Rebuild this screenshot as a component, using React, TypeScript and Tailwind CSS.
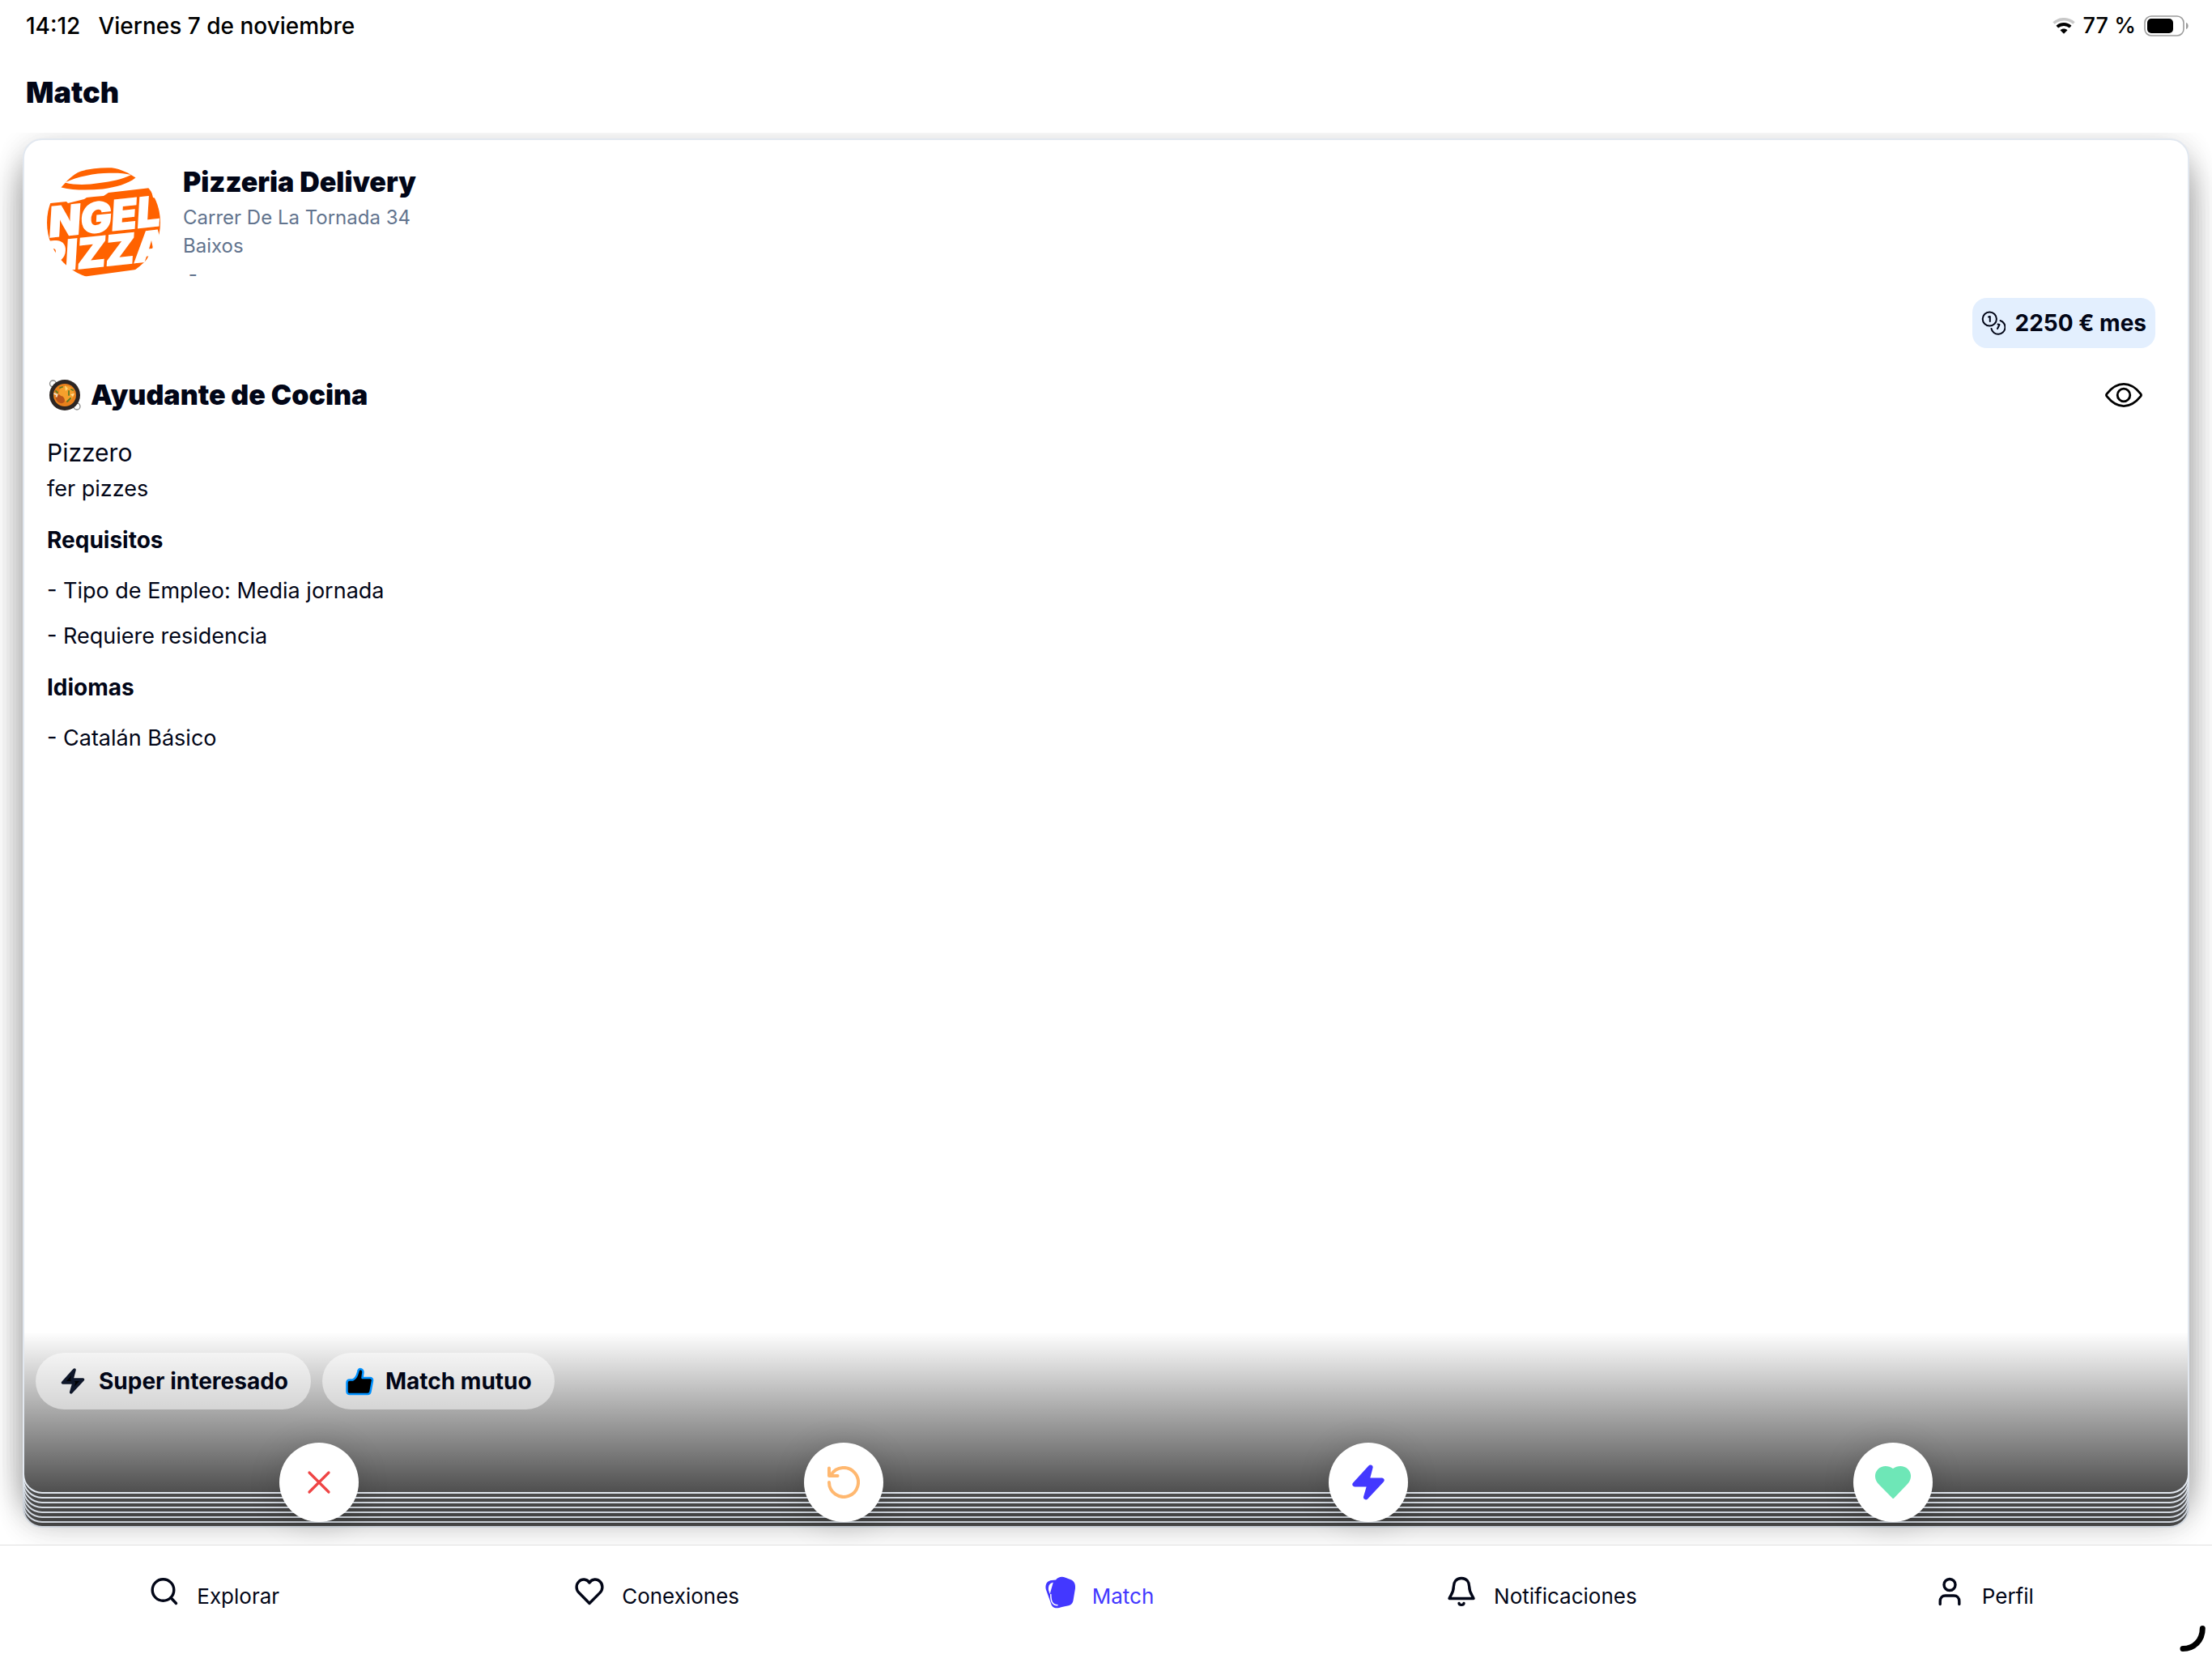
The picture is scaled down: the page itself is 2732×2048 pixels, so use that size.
import type { ReactNode } from 'react';

const BoltShape = 'M22.6 3.4 3.4 24.6h18.2L17 40.4 36.6 19.4H18.4z';

// Full class names so Tailwind can pick them up
const BACK_CARDS = [
  'top-[42px] -bottom-[42px]',
  'top-[36px] -bottom-[36px]',
  'top-[30px] -bottom-[30px]',
  'top-[24px] -bottom-[24px]',
  'top-[18px] -bottom-[18px]',
  'top-[12px] -bottom-[12px]',
  'top-[6px] -bottom-[6px]',
];

const CARD_SHADOW = 'shadow-[0_4px_44px_rgba(0,0,0,0.065)]';

const requisitos = ['- Tipo de Empleo: Media jornada', '- Requiere residencia'];
const idiomas = ['- Catalán Básico'];

function CompanyLogo() {
  return (
    <svg className="w-[140px] h-[140px] shrink-0 overflow-visible" viewBox="0 0 140 140" role="img" aria-label="Angelo Pizza">
      <defs>
        <clipPath id="logo-clip"><circle cx="70" cy="70" r="70" /></clipPath>
      </defs>
      <g clipPath="url(#logo-clip)">
        <path d="M17.5 26.5C24 19 32 10 42 6.500C54 3 66 2 80 2.300C92 4 101 9 109.500 14.500C100 22 86 26 69 28.500C52 30 34 30.500 17.500 26.500Z" fill="#ff6200" />
        <path d="M22 20.500C38 13 60 8.500 78 8.700C88 8.500 96 9 104 11C92 17 80 19 65 21C50 23.500 36 24 22 20.500Z" fill="#fff" />
        <path d="M0 46.500 24 44l2 2 20-5 3-2 9-1 12-1 6-4 52-6 3 12 9 2V92l-7 4-11 22-12 10-70 9.500-9-6L24 124 3 100V91L0 88Z" fill="#ff6200" />
      </g>
      <g fill="#fff" stroke="#fff" strokeWidth="1.500" className="font-['Inter'] font-black italic">
        <text x="4" y="88" fontSize="51" transform="rotate(-6 4 88)">NGEL</text>
        <text x="-9" y="132" fontSize="51" transform="rotate(-6 -9 132)">PIZZA</text>
      </g>
    </svg>
  );
}

function PaellaIcon() {
  return (
    <svg className="w-10 h-10 shrink-0" viewBox="0 0 40 40" aria-hidden="true">
      <circle cx="5.500" cy="6" r="4" fill="none" stroke="#8a8a8a" strokeWidth="1.300" />
      <circle cx="35" cy="34" r="4" fill="none" stroke="#8a8a8a" strokeWidth="1.300" />
      <circle cx="20" cy="20" r="19" fill="#2c2624" />
      <circle cx="20" cy="20" r="14" fill="#e8811c" />
      <circle cx="22" cy="18" r="9.500" fill="#f5a02c" />
      <path d="M9 20c2-2 5-1 6 1 3 0 5 3 5 6-1 4-6 4-9 1-2-2-3-5-2-8z" fill="#b8541a" />
      <path d="M6.500 18l4 1.500-1 3" stroke="#f3ddc0" strokeWidth="2" fill="none" />
      <path d="M20 8l4 4-3 3z" fill="#ffd77a" />
      <path d="M27 19l5-1-2 4z" fill="#ffe09a" />
      <path d="M14 11l3-1M25 15v5M23 28l4-4M9 15l2 2M28 13l2 1" stroke="#5c7a25" strokeWidth="1.800" strokeLinecap="round" />
    </svg>
  );
}

function CoinsIcon() {
  return (
    <svg className="w-[30px] h-[30px]" viewBox="0 0 30 30" fill="none" stroke="currentColor" strokeWidth="2" strokeLinecap="round" strokeLinejoin="round" aria-hidden="true">
      <circle cx="10.300" cy="10" r="8.600" />
      <path d="M23.500 12a8.600 8.600 0 1 1-11 10" />
      <path d="M9 7.500l1.800-.5v6" />
      <path d="M20.500 16.500l2 .500-2.500 5" />
    </svg>
  );
}

function RoundButton({ label, children }: { label: string; children: ReactNode }) {
  return (
    <button type="button" aria-label={label} className="w-[98px] h-[98px] rounded-full bg-white flex items-center justify-center shadow-[0_4px_40px_rgba(0,0,0,0.15)]">
      {children}
    </button>
  );
}

function Chip({ icon, children }: { icon: ReactNode; children: ReactNode }) {
  return (
    <span className="h-[70px] px-7 flex items-center gap-3.5 rounded-full bg-white/50 text-[28px] font-bold">
      {icon}
      {children}
    </span>
  );
}

function Section({ title, items }: { title: string; items: string[] }) {
  return (
    <section className="mt-[19px]">
      <h3 className="text-[28px] leading-[44px] font-bold">{title}</h3>
      <ul className="mt-[19px] flex flex-col gap-3 text-[27px] leading-[44px]">
        {items.map(item => <li key={item}>{item}</li>)}
      </ul>
    </section>
  );
}

const tabs = [
  {
    label: 'Explorar',
    icon: <><circle cx="16.500" cy="16" r="13.300" /><path d="M26 25.500l6.500 7" /></>,
  },
  {
    label: 'Conexiones',
    icon: <path d="M18 32.500 5 19.300C1.200 15.300 1.200 9.500 4.700 5.800 8.600 1.800 14.800 2 18 7c3.200-5 9.400-5.200 13.300-1.200 3.500 3.700 3.500 9.500-.3 13.500z" />,
  },
  {
    label: 'Match',
    active: true,
    icon: (
      <>
        <path d="M13 3.500C16-.5 21-1 25 .8l6 2.200c5 2 6.500 6 6 11l-2.500 15c-1 4-3 6-7 6.500l-7 1.500c-7 2.500-12 1.500-13.500-4.500L.7 15C-.5 8 3 4.500 8 4z" fill="currentColor" stroke="none" />
        <path d="M9.800 6.500C4.500 8 3.500 12 4 16l1.700 5z" fill="#fff" stroke="none" />
        <path d="M6.800 21.500C6.800 29 8 34.500 15 34.800" stroke="#fff" strokeWidth="1.500" />
      </>
    ),
  },
  {
    label: 'Notificaciones',
    icon: (
      <>
        <path d="M18 1.500C11 1.500 8.300 6.500 8.300 12 8.300 19 5 22 3 26.500h30C31 22 27.700 19 27.700 12c0-5.500-2.700-10.500-9.700-10.500z" />
        <path d="M15 32.500c.5 2.500 5.500 2.500 6 0" />
      </>
    ),
  },
  {
    label: 'Perfil',
    icon: <><circle cx="18" cy="9.500" r="7" /><path d="M6.200 33.500V30c0-4.300 2.700-7 6.500-7h10.600c3.800 0 6.500 2.700 6.500 7v3.500" /></>,
  },
];

export default function App() {
  return (
    <div className="h-screen flex flex-col bg-white text-[#020617] font-['Inter',sans-serif] overflow-hidden">
      {/* Status bar */}
      <div className="h-16 shrink-0 pl-8 pr-7 flex items-center justify-between text-black font-medium">
        <div className="flex gap-[22px] text-[28px]">
          <span>14:12</span>
          <span>Viernes 7 de noviembre</span>
        </div>
        <div className="flex items-center gap-2.5 text-[27px]">
          <svg className="w-7 h-5" viewBox="0 0 28 20" fill="none" aria-hidden="true">
            <path d="M1.500 6.500C8.500.2 19.500.2 26.500 6.500" stroke="#c8c8c8" strokeWidth="3.600" />
            <path d="M5.800 11.200c4.700-4.300 11.700-4.300 16.400 0" stroke="#000" strokeWidth="3.800" />
            <path d="M9.500 15.200c2.600-2.200 6.400-2.200 9 0L14 19.800z" fill="#000" />
          </svg>
          <span>77 %</span>
          <svg className="w-[56px] h-[26px]" viewBox="0 0 56 26" aria-hidden="true">
            <rect x="1" y="1" width="48" height="24" rx="8" fill="none" stroke="#9b9b9b" strokeWidth="1.600" />
            <rect x="4" y="4" width="32" height="18" rx="5" fill="#000" />
            <path d="M52 9c3.500 1 3.500 7 0 8z" fill="#9b9b9b" />
          </svg>
        </div>
      </div>

      <header className="h-[100px] shrink-0 px-8 flex items-center">
        <h1 className="text-[36px] leading-10 font-black">Match</h1>
      </header>

      {/* Card deck */}
      <main className="flex-1 min-h-0 flex flex-col overflow-hidden px-7 pt-[7px] pb-[63px]">
        <div className="relative flex-1 flex flex-col">
          {BACK_CARDS.map(pos => (
            <div key={pos} className={`absolute inset-x-0 ${pos} rounded-3xl border-2 border-slate-200 bg-[#4e4e4e] ${CARD_SHADOW}`} />
          ))}

          <article className={`relative flex-1 flex flex-col rounded-3xl border-2 border-slate-200 bg-white overflow-hidden ${CARD_SHADOW}`}>
            <div className="flex-1 px-7 pt-8">
              <div className="flex items-start gap-7">
                <CompanyLogo />
                <div>
                  <h2 className="text-[34px] leading-10 font-black">Pizzeria Delivery</h2>
                  <address className="not-italic mt-1.5 text-2xl leading-[35px] text-slate-500">
                    Carrer De La Tornada 34<br />Baixos<br />&nbsp;-
                  </address>
                </div>
              </div>

              <div className="mt-3 pr-3 flex justify-end">
                <div className="h-[62px] px-[11px] flex items-center gap-3 rounded-[18px] bg-[#e3effe] text-[28px] font-bold">
                  <CoinsIcon />
                  2250 € mes
                </div>
              </div>

              <div className="mt-[34px] pr-3 h-12 flex items-center justify-between">
                <div className="flex items-center gap-3 pl-0.5">
                  <PaellaIcon />
                  <h2 className="text-[34px] leading-10 font-black">Ayudante de Cocina</h2>
                </div>
                <button type="button" aria-label="Ver oferta" className="px-4">
                  <svg className="w-[46px] h-[30px]" viewBox="0 0 46 30" fill="none" stroke="#000" strokeWidth="2.800" strokeLinejoin="round">
                    <path d="M2.200 16.700c-.9-1.100-.9-2.300 0-3.400C8 6 15 1.400 23 1.400S38 6 43.800 13.300c.9 1.100.9 2.300 0 3.400C38 24 31 28.600 23 28.600S8 24 2.200 16.700z" />
                    <circle cx="23" cy="15" r="7.800" />
                  </svg>
                </button>
              </div>

              <p className="mt-6 text-[30px] leading-[46px]">Pizzero</p>
              <p className="text-[27px] leading-[44px]">fer pizzes</p>

              <Section title="Requisitos" items={requisitos} />
              <Section title="Idiomas" items={idiomas} />
            </div>

            <div className="h-[198px] shrink-0 px-3.5 pt-[26px] flex items-start gap-3.5 bg-linear-to-b from-black/0 to-black/69">
              <Chip icon={
                <svg className="w-9 h-9" viewBox="-2 -2 44 48" fill="#000" stroke="#0f172a" strokeWidth="5" strokeLinejoin="round" aria-hidden="true"><path d={BoltShape} /></svg>
              }>
                Super interesado
              </Chip>
              <Chip icon={
                <svg className="w-9 h-9" viewBox="0 0 36 36" fill="#000" stroke="#0091ff" strokeWidth="2.500" strokeLinejoin="round" aria-hidden="true">
                  <path d="M6 16.500h3.500c3.500-1.500 5.500-5 6.500-9.500.4-2.500 1-4 3-4s3.800 2 3.400 4.500L21.500 14H31c2.300 0 3.300 1.500 3 3.500L31.500 31c-.4 2-1.500 3-3.500 3H6c-2.300 0-3.500-1.200-3.500-3.500V20c0-2.300 1.200-3.500 3.500-3.500z" />
                </svg>
              }>
                Match mutuo
              </Chip>
            </div>
          </article>

          {/* Swipe actions float over the deck */}
          <div className="absolute inset-x-0 -bottom-[35px] px-[42px] flex justify-around">
            <RoundButton label="Descartar">
              <svg className="w-8 h-8" viewBox="0 0 32 32" stroke="#ef4444" strokeWidth="3.200" strokeLinecap="round"><path d="M4 4l24 24M28 4 4 28" /></svg>
            </RoundButton>
            <RoundButton label="Deshacer">
              <svg className="w-10 h-10" viewBox="0 0 40 40" fill="none" stroke="#ffb870" strokeWidth="4" strokeLinecap="round" strokeLinejoin="round">
                <path d="M2 20A18 18 0 1 0 4.500 10.800" />
                <path d="M2 2.500V12h10.500" />
              </svg>
            </RoundButton>
            <RoundButton label="Super interesado">
              <svg className="w-10 h-11" viewBox="0 0 40 44" fill="#4338ff" stroke="#4338ff" strokeWidth="6" strokeLinejoin="round"><path d={BoltShape} /></svg>
            </RoundButton>
            <RoundButton label="Me interesa">
              <svg className="w-11 h-10" viewBox="0 0 44 40" fill="#6ee7b7"><path d="M22 40.300 4 22C-1.300 16.500-1.300 8.500 3.500 3.700 8.500-1.200 16.500-1 22 3c5.500-4 13.500-4.200 18.500.7 4.800 4.800 4.800 12.800-.5 18.300L23 39.800z" /></svg>
            </RoundButton>
          </div>
        </div>
      </main>

      {/* Tab bar */}
      <nav className="h-[140px] shrink-0 border-t border-[#e0e0e0] bg-white pt-[38px] grid grid-cols-5 items-start relative">
        {tabs.map(t => (
          <a key={t.label} href="#" aria-current={t.active ? 'page' : undefined} className={`h-12 pr-4 flex items-center justify-center gap-[22px] text-[26px] ${t.active ? 'text-[#4338ff]' : ''}`}>
            <span className="pb-2.5">
              <svg className="w-9 h-9 overflow-visible" viewBox="0 0 36 36" fill="none" stroke="currentColor" strokeWidth="3.400" strokeLinecap="round" strokeLinejoin="round" aria-hidden="true">{t.icon}</svg>
            </span>
            {t.label}
          </a>
        ))}
        <svg className="absolute right-2 bottom-2 w-8 h-8" viewBox="0 0 32 32" fill="none" stroke="#000" strokeWidth="7" strokeLinecap="round" aria-hidden="true">
          <path d="M28.300 3.500C28.300 18 18 28.500 4 28.500" />
        </svg>
      </nav>
    </div>
  );
}
